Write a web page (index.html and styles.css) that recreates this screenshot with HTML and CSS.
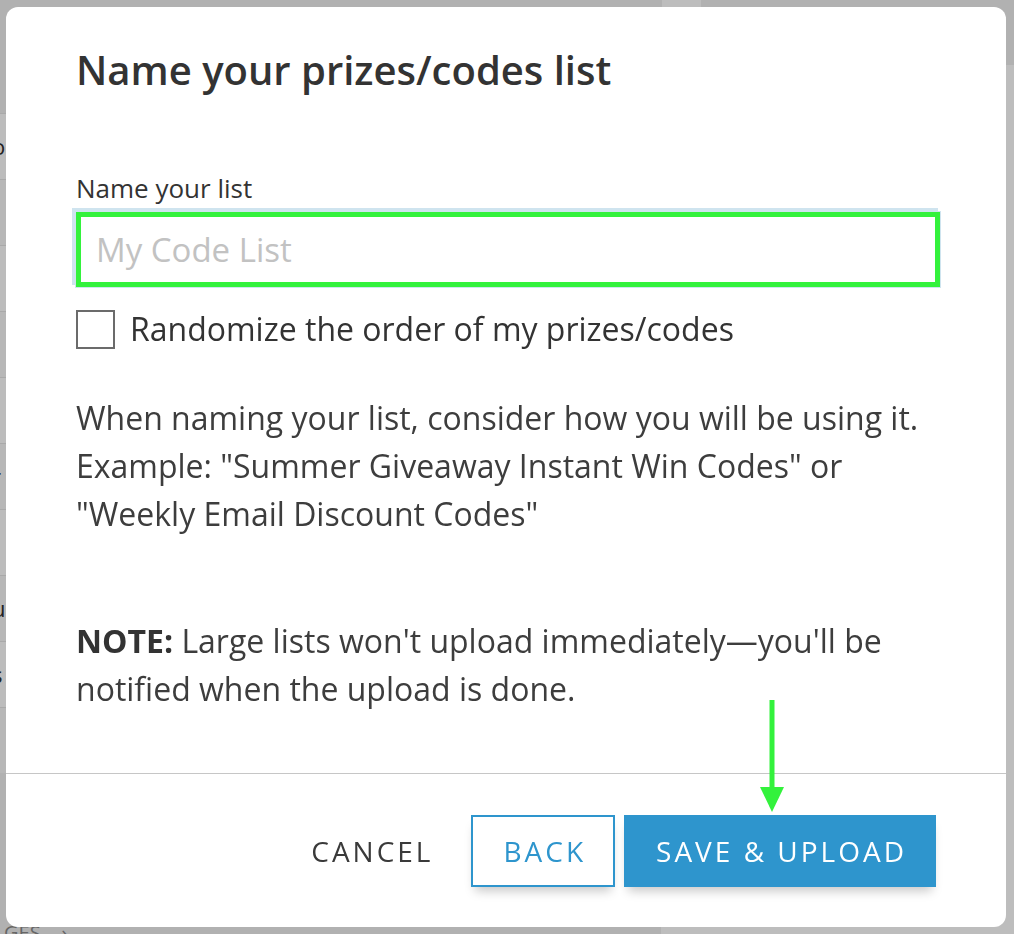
FILE: index.html
```html
<!DOCTYPE html>
<html lang="en">
<head>
    <meta charset="UTF-8">
    <title>Name your prizes/codes list</title>
    <link rel="stylesheet" href="styles.css">
</head>
<body>
    <!-- page behind the modal -->
    <div class="page">
        <div class="page-list">
            <div class="list-row">o</div>
            <div class="list-row alt"></div>
            <div class="list-row"></div>
            <div class="list-row alt"></div>
            <div class="list-row">i</div>
            <div class="list-row alt">r</div>
            <div class="list-row"></div>
            <div class="list-row alt">u</div>
            <div class="list-row">s</div>
            <div class="list-row alt"></div>
            <div class="list-footer">GES &nbsp;&nbsp;&nbsp;&rsaquo;</div>
        </div>
        <div class="page-side">
            <div class="side-top"><span class="side-tab"></span></div>
        </div>
    </div>

    <div class="overlay">
        <div class="modal">
            <div class="modal-body">
                <h2 class="modal-title">Name your prizes/codes list</h2>

                <label class="field-label" for="list-name">Name your list</label>
                <input class="field-input" id="list-name" type="text" placeholder="My Code List">

                <label class="check-row">
                    <span class="check-box"></span>
                    <span>Randomize the order of my prizes/codes</span>
                </label>

                <p class="hint">When naming your list, consider how you will be using it. Example: "Summer Giveaway Instant Win Codes" or "Weekly Email Discount Codes"</p>

                <p class="hint note"><strong>NOTE:</strong> Large lists won't upload immediately—you'll be notified when the upload is done.</p>
            </div>

            <div class="modal-footer">
                <button class="btn btn-cancel">Cancel</button>
                <button class="btn btn-back">Back</button>
                <button class="btn btn-save">Save &amp; Upload</button>
            </div>

            <!-- annotation arrow -->
            <svg class="arrow" width="24" height="112" viewBox="0 0 24 112">
                <rect x="9.5" y="0" width="5" height="90" fill="#33f23c"/>
                <polygon points="0,87 24,87 12,112" fill="#33f23c"/>
            </svg>
        </div>
    </div>
</body>
</html>
```

FILE: styles.css
```css
html, body {
    margin: 0;
    height: 100%;
    overflow: hidden;
}

body {
    font-family: 'Open Sans', 'Liberation Sans', sans-serif;
    background-color: #b1b1b1;
    color: #333;
}

/* background page */
.page {
    display: flex;
    height: 100vh;
}

.page-list {
    width: 661px;
    padding-top: 113px;
    display: flex;
    flex-direction: column;
}

.list-row {
    height: 65px;
    border-top: 1px solid #a9a9a9;
    background-color: #bcbcbc;
    font-size: 22px;
    line-height: 65px;
    color: #222;
    text-indent: -8px;
}

.list-row.alt {
    background-color: #b7b7b7;
}

.list-footer {
    margin-top: auto;
    padding: 0 0 0 4px;
    font-size: 20px;
    line-height: 14px;
    height: 8px;
    color: #666;
}

.page-side {
    flex: 1;
    background-color: #bdbdbd;
}

.side-top {
    height: 65px;
    background-color: #b1b1b1;
}

.side-tab {
    display: block;
    width: 39px;
    height: 7px;
    margin-left: 1px;
    background-color: #bdbdbd;
}

/* modal */
.overlay {
    position: fixed;
    top: 0;
    left: 0;
    right: 0;
    bottom: 0;
    display: flex;
    padding: 7px 8px 7px 6px;
}

.modal {
    position: relative;
    flex: 1;
    display: flex;
    flex-direction: column;
    background-color: #fff;
    border-radius: 12px;
}

.modal-body {
    flex: 1;
    padding: 39px 66px 0 70px;
}

.modal-title {
    margin: 0;
    font-size: 40px;
    line-height: 48px;
    font-weight: 600;
    color: #333;
}

.field-label {
    display: block;
    margin-top: 76px;
    font-size: 26px;
    line-height: 36px;
    color: #333;
}

.field-input {
    display: block;
    box-sizing: border-box;
    width: 100%;
    height: 75px;
    margin: 6px 0 0 0;
    padding: 0 15px;
    border: 5px solid #33f23c;
    border-radius: 0;
    outline: none;
    box-shadow: 0 0 0 1px #cfe4ef, -3px -3px 0 1px #cfe4ef;
    font-family: inherit;
    font-size: 33px;
    color: #333;
}

.field-input::placeholder {
    color: #c2c2c2;
}

.check-row {
    display: flex;
    align-items: center;
    gap: 15px;
    margin-top: 18px;
    font-size: 32px;
    line-height: 48px;
    color: #333;
}

.check-box {
    box-sizing: border-box;
    width: 39px;
    height: 39px;
    border: 2px solid #6b6b6b;
}

.hint {
    margin: 41px 0 0 0;
    font-size: 32px;
    line-height: 48px;
    color: #3d3d3d;
}

.hint.note {
    margin-top: 79px;
}

.hint strong {
    font-weight: 700;
    color: #333;
}

.modal-footer {
    display: flex;
    justify-content: flex-end;
    gap: 9px;
    padding: 41px 70px 40px;
    border-top: 1px solid #c6c6c6;
}

.btn {
    box-sizing: border-box;
    height: 72px;
    padding: 0 27px 0 30px;
    border: 2px solid transparent;
    border-radius: 0;
    background: none;
    font-family: inherit;
    font-size: 28px;
    letter-spacing: 3px;
    text-transform: uppercase;
    cursor: pointer;
}

.btn-cancel {
    color: #3a3a3a;
}

.btn-back {
    background-color: #fff;
    border-color: #2e95cd;
    color: #2e95cd;
    box-shadow: 0 8px 10px -4px rgba(0, 0, 0, 0.22);
}

.btn-save {
    background-color: #2e95cd;
    border-color: #2e95cd;
    color: #fff;
    box-shadow: 0 8px 10px -4px rgba(0, 0, 0, 0.22);
}

.arrow {
    position: absolute;
    left: 754px;
    top: 693px;
}
```
